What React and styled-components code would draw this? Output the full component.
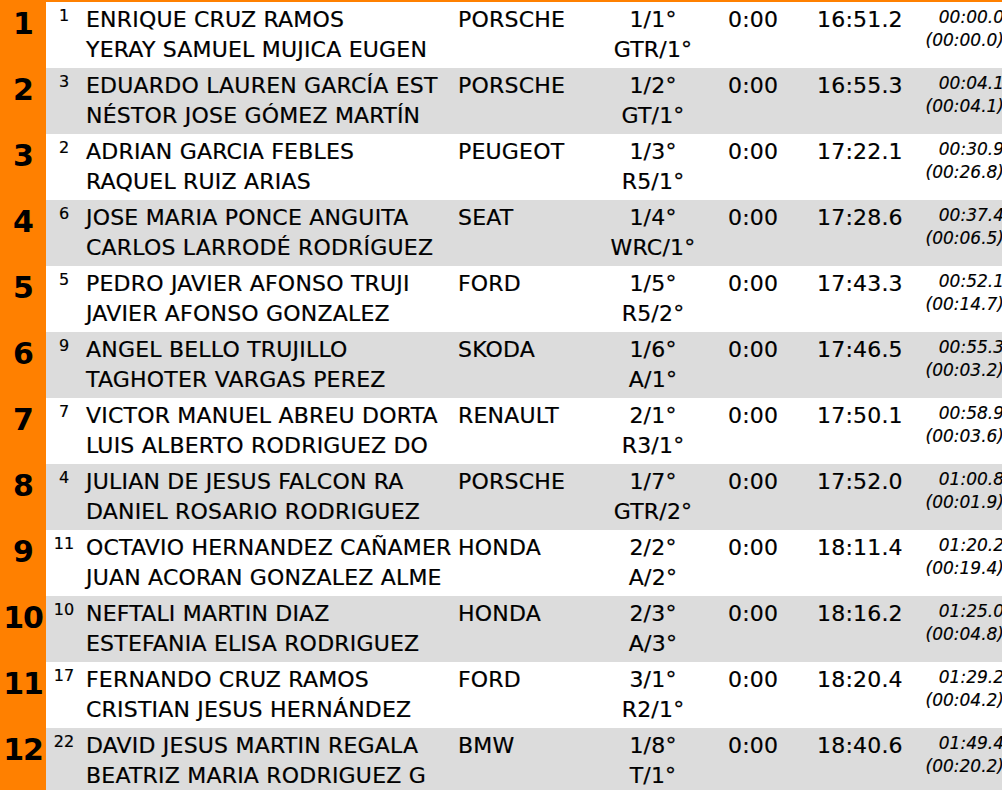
import React from "react";
import styled, { createGlobalStyle } from "styled-components";

const Global = createGlobalStyle`
  html, body { margin: 0; padding: 0; overflow: hidden; background: #ffffff; }
  body { width: 1002px; height: 790px; }
`;

const Board = styled.div`
  width: 1006px;
  background: #ff8000;
  padding-top: 2px;
  font-family: "DejaVu Sans", Verdana, sans-serif;
  color: #000;
`;

const Row = styled.div`
  display: grid;
  grid-template-columns: 46px 36px 376px 140px 110px 100px 96px 102px;
  height: 66px;
`;

const Pos = styled.div`
  background: #ff8000;
  text-align: center;
  font-weight: bold;
  font-size: 30px;
  line-height: 40px;
  padding-top: 2px;
  letter-spacing: -1px;
`;

const Cell = styled.div`
  background: ${(p) => (p.$alt ? "#dcdcdc" : "#ffffff")};
  font-size: 22px;
  line-height: 30px;
  padding-top: 3px;
  white-space: nowrap;
  letter-spacing: 0.2px;
  -webkit-text-stroke: 0.2px #000;
  text-align: ${(p) => p.$align || "left"};
  padding-left: ${(p) => p.$pl || 0}px;
`;

const Car = styled(Cell)`
  font-size: 16px;
  line-height: 20px;
  padding-top: 4px;
  letter-spacing: 0;
  text-align: center;
`;

const Line = styled.div``;

const Diff = styled(Cell)`
  font-style: italic;
  font-size: 17px;
  line-height: 23px;
  padding-top: 4px;
  letter-spacing: 0;
  -webkit-text-stroke: 0.15px #000;
  text-align: right;
  padding-right: 2px;
`;

const rows = [
  [1, 1, "ENRIQUE CRUZ RAMOS", "YERAY SAMUEL MUJICA EUGEN", "PORSCHE", "1/1°", "GTR/1°", "16:51.2", "00:00.0", "(00:00.0)"],
  [2, 3, "EDUARDO LAUREN GARCÍA EST", "NÉSTOR JOSE GÓMEZ MARTÍN", "PORSCHE", "1/2°", "GT/1°", "16:55.3", "00:04.1", "(00:04.1)"],
  [3, 2, "ADRIAN GARCIA FEBLES", "RAQUEL RUIZ ARIAS", "PEUGEOT", "1/3°", "R5/1°", "17:22.1", "00:30.9", "(00:26.8)"],
  [4, 6, "JOSE MARIA PONCE ANGUITA", "CARLOS LARRODÉ RODRÍGUEZ", "SEAT", "1/4°", "WRC/1°", "17:28.6", "00:37.4", "(00:06.5)"],
  [5, 5, "PEDRO JAVIER AFONSO TRUJI", "JAVIER AFONSO GONZALEZ", "FORD", "1/5°", "R5/2°", "17:43.3", "00:52.1", "(00:14.7)"],
  [6, 9, "ANGEL BELLO TRUJILLO", "TAGHOTER VARGAS PEREZ", "SKODA", "1/6°", "A/1°", "17:46.5", "00:55.3", "(00:03.2)"],
  [7, 7, "VICTOR MANUEL ABREU DORTA", "LUIS ALBERTO RODRIGUEZ DO", "RENAULT", "2/1°", "R3/1°", "17:50.1", "00:58.9", "(00:03.6)"],
  [8, 4, "JULIAN DE JESUS FALCON RA", "DANIEL ROSARIO RODRIGUEZ", "PORSCHE", "1/7°", "GTR/2°", "17:52.0", "01:00.8", "(00:01.9)"],
  [9, 11, "OCTAVIO HERNANDEZ CAÑAMER", "JUAN ACORAN GONZALEZ ALME", "HONDA", "2/2°", "A/2°", "18:11.4", "01:20.2", "(00:19.4)"],
  [10, 10, "NEFTALI MARTIN DIAZ", "ESTEFANIA ELISA RODRIGUEZ", "HONDA", "2/3°", "A/3°", "18:16.2", "01:25.0", "(00:04.8)"],
  [11, 17, "FERNANDO CRUZ RAMOS", "CRISTIAN JESUS HERNÁNDEZ", "FORD", "3/1°", "R2/1°", "18:20.4", "01:29.2", "(00:04.2)"],
  [12, 22, "DAVID JESUS MARTIN REGALA", "BEATRIZ MARIA RODRIGUEZ G", "BMW", "1/8°", "T/1°", "18:40.6", "01:49.4", "(00:20.2)"],
];

export default function App() {
  return (
    <>
      <Global />
      <Board>
        {rows.map((r, i) => {
          const alt = i % 2 === 1;
          return (
            <Row key={r[0]}>
              <Pos>{r[0]}</Pos>
              <Car $alt={alt}>{r[1]}</Car>
              <Cell $alt={alt} $pl={4}>
                <Line>{r[2]}</Line>
                <Line>{r[3]}</Line>
              </Cell>
              <Cell $alt={alt}>{r[4]}</Cell>
              <Cell $alt={alt} $align="center">
                <Line>{r[5]}</Line>
                <Line>{r[6]}</Line>
              </Cell>
              <Cell $alt={alt} $pl={20}>0:00</Cell>
              <Cell $alt={alt} $pl={9}>{r[7]}</Cell>
              <Diff $alt={alt}>
                <Line>{r[8]}</Line>
                <Line>{r[9]}</Line>
              </Diff>
            </Row>
          );
        })}
      </Board>
    </>
  );
}
